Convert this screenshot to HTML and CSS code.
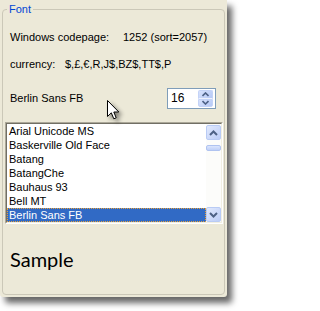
FILE: index.html
```html
<!DOCTYPE html>
<html>
<head>
<meta charset="utf-8">
<link rel="stylesheet" href="styles.css">
</head>
<body>
<div class="window">
  <fieldset class="group">
    <legend class="legend">Font</legend>
    <div class="row row1"><span class="label">Windows codepage:</span><span>1252 (sort=2057)</span></div>
    <div class="row row2"><span class="label2">currency:</span><span>$,£,€,R,J$,BZ$,TT$,P</span></div>
    <div class="row row3">
      <span>Berlin Sans FB</span>
      <div class="spinner">
        <span class="spin-value">16</span>
        <div class="spin-buttons">
          <div class="spin-btn up"><svg width="7" height="5" viewBox="0 0 7 5"><polyline points="0.5,4 3.5,1 6.5,4" fill="none" stroke="#4d6185" stroke-width="1.6"/></svg></div>
          <div class="spin-btn down"><svg width="7" height="5" viewBox="0 0 7 5"><polyline points="0.5,1 3.5,4 6.5,1" fill="none" stroke="#4d6185" stroke-width="1.6"/></svg></div>
        </div>
      </div>
    </div>
    <div class="listbox">
      <div class="list-inner">
        <div class="items">
          <div class="item">Arial Unicode MS</div>
          <div class="item">Baskerville Old Face</div>
          <div class="item">Batang</div>
          <div class="item">BatangChe</div>
          <div class="item">Bauhaus 93</div>
          <div class="item">Bell MT</div>
          <div class="item selected">Berlin Sans FB</div>
        </div>
        <div class="scrollbar">
          <div class="sb-btn"><svg width="9" height="6" viewBox="0 0 9 6"><polyline points="1,5 4.5,1.5 8,5" fill="none" stroke="#4d6185" stroke-width="2"/></svg></div>
          <div class="sb-thumb"></div>
          <div class="sb-track"></div>
          <div class="sb-btn"><svg width="9" height="6" viewBox="0 0 9 6"><polyline points="1,1 4.5,4.5 8,1" fill="none" stroke="#4d6185" stroke-width="2"/></svg></div>
        </div>
      </div>
    </div>
    <div class="sample">Sample</div>
  </fieldset>
</div>
<svg class="cursor" width="14" height="21" viewBox="0 0 14 21"><path d="M0.5,0.5 L0.5,16.5 L4.3,12.8 L6.8,18.8 L9.2,17.8 L6.8,12 L11.8,12 Z" fill="#fff" stroke="#000" stroke-width="1" stroke-linejoin="miter"/></svg>
</body>
</html>
```
FILE: styles.css
```css
html, body {
  margin: 0;
  padding: 0;
  background: #ffffff;
}
body {
  width: 241px;
  height: 311px;
  position: relative;
  overflow: hidden;
  font-family: "Liberation Sans", Arial, sans-serif;
  font-size: 11px;
  color: #000;
}
.window {
  width: 227px;
  height: 297px;
  background: #ece9d8;
  border-radius: 0 0 3px 3px;
  box-shadow: 5px 6px 6px rgba(0, 0, 0, 0.6);
  display: flex;
  flex-direction: column;
  box-sizing: border-box;
}
.group {
  flex: 1;
  margin: 3px 2px 2px 2px;
  padding: 0;
  border: 1px solid #cbc8b8;
  border-radius: 4px;
  min-width: 0;
  display: block;
}
.legend {
  margin-left: 4px;
  padding: 0 2px;
  color: #0046d5;
  line-height: 13px;
  font-size: 11px;
}
.row {
  display: flex;
  align-items: center;
  line-height: 13px;
  padding-left: 7px;
  white-space: nowrap;
}
.row1 { margin-top: 15px; }
.row2 { margin-top: 14px; }
.label { width: 113px; }
.label2 { width: 55px; }
.row3 {
  margin-top: 17px;
  justify-content: space-between;
  padding-right: 8px;
  height: 21px;
}
.spinner {
  width: 49px;
  height: 21px;
  box-sizing: border-box;
  border: 1px solid #7f9db9;
  background: #fff;
  display: flex;
  align-items: center;
  justify-content: space-between;
  padding: 1px 2px 1px 2px;
}
.spin-value {
  padding-left: 1px;
  font-size: 12px;
}
.spin-buttons {
  width: 15px;
  height: 17px;
  display: flex;
  flex-direction: column;
}
.spin-btn {
  flex: 1;
  display: flex;
  align-items: center;
  justify-content: center;
  background: linear-gradient(135deg, #d7e2fc, #b6c9f6);
  border: 1px solid #c4d3f7;
  box-sizing: border-box;
}
.spin-btn.up { border-radius: 2px 2px 0 0; border-bottom-color: #eef2fd; }
.spin-btn.down { border-radius: 0 0 2px 2px; }
.listbox {
  margin: 13px 1px 0 2px;
  height: 102px;
  box-sizing: border-box;
  border: 1px solid;
  border-color: #aca899 #ffffff #ffffff #aca899;
  background: #fff;
}
.list-inner {
  height: 100%;
  box-sizing: border-box;
  border: 1px solid;
  border-color: #716f64 #f1efe2 #f1efe2 #716f64;
  display: flex;
}
.items {
  flex: 1;
  min-width: 0;
}
.item {
  height: 14px;
  line-height: 14px;
  padding-left: 2px;
  white-space: nowrap;
}
.item.selected {
  background: #316ac5;
  color: #fff;
  outline: 1px dotted #e9a23a;
  outline-offset: -1px;
}
.scrollbar {
  width: 15px;
  background: #fcfcfa;
  display: flex;
  flex-direction: column;
  padding-top: 1px;
  box-sizing: border-box;
}
.sb-btn {
  height: 15px;
  display: flex;
  align-items: center;
  justify-content: center;
  box-sizing: border-box;
  border: 1px solid #b9cbf4;
  border-radius: 2px;
  background: linear-gradient(135deg, #e1e9fd, #bccdf7);
}
.sb-thumb {
  margin-top: 5px;
  height: 6px;
  box-sizing: border-box;
  border: 1px solid #b0c3f0;
  border-radius: 2px;
  background: linear-gradient(180deg, #dbe5fd, #bfd0f8);
}
.sb-track { flex: 1; }
.sample {
  margin-top: 23px;
  padding-left: 7px;
  font-family: Lato, "Noto Sans", sans-serif;
  font-size: 20px;
  line-height: 24px;
}
.cursor {
  position: absolute;
  left: 107px;
  top: 100px;
  filter: drop-shadow(3px 3px 2px rgba(0, 0, 0, 0.45));
}
```
